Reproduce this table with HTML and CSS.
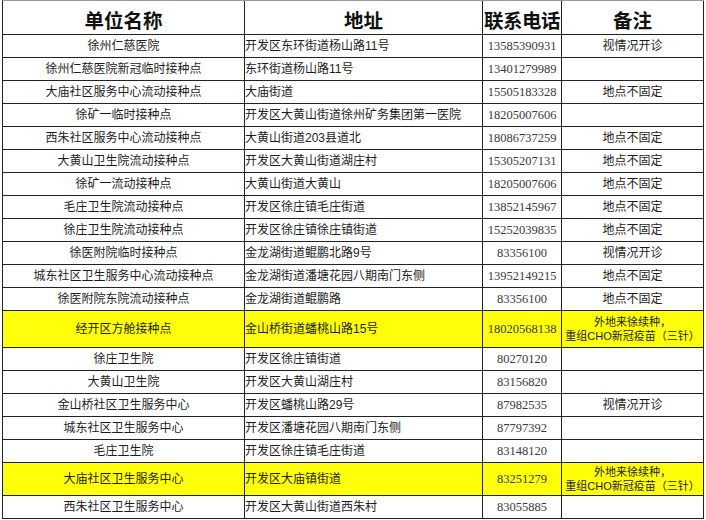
FILE: index.html
```html
<!DOCTYPE html>
<html lang="zh-CN">
<head>
<meta charset="utf-8">
<title>接种点</title>
<link rel="stylesheet" href="styles.css">
</head>
<body>
<table class="sheet">
  <thead>
    <tr class="head">
      <th class="c-name">单位名称</th>
      <th class="c-addr">地址</th>
      <th class="c-tel">联系电话</th>
      <th class="c-note">备注</th>
    </tr>
  </thead>
  <tbody>
    <tr><td class="name">徐州仁慈医院</td><td class="addr">开发区东环街道杨山路11号</td><td class="tel">13585390931</td><td class="note">视情况开诊</td></tr>
    <tr><td class="name">徐州仁慈医院新冠临时接种点</td><td class="addr">东环街道杨山路11号</td><td class="tel">13401279989</td><td class="note"></td></tr>
    <tr><td class="name">大庙社区服务中心流动接种点</td><td class="addr">大庙街道</td><td class="tel">15505183328</td><td class="note">地点不固定</td></tr>
    <tr><td class="name">徐矿一临时接种点</td><td class="addr">开发区大黄山街道徐州矿务集团第一医院</td><td class="tel">18205007606</td><td class="note"></td></tr>
    <tr><td class="name">西朱社区服务中心流动接种点</td><td class="addr">大黄山街道203县道北</td><td class="tel">18086737259</td><td class="note">地点不固定</td></tr>
    <tr><td class="name">大黄山卫生院流动接种点</td><td class="addr">开发区大黄山街道湖庄村</td><td class="tel">15305207131</td><td class="note">地点不固定</td></tr>
    <tr><td class="name">徐矿一流动接种点</td><td class="addr">大黄山街道大黄山</td><td class="tel">18205007606</td><td class="note">地点不固定</td></tr>
    <tr><td class="name">毛庄卫生院流动接种点</td><td class="addr">开发区徐庄镇毛庄街道</td><td class="tel">13852145967</td><td class="note">地点不固定</td></tr>
    <tr><td class="name">徐庄卫生院流动接种点</td><td class="addr">开发区徐庄镇徐庄镇街道</td><td class="tel">15252039835</td><td class="note">地点不固定</td></tr>
    <tr><td class="name">徐医附院临时接种点</td><td class="addr">金龙湖街道鲲鹏北路9号</td><td class="tel">83356100</td><td class="note">视情况开诊</td></tr>
    <tr><td class="name">城东社区卫生服务中心流动接种点</td><td class="addr">金龙湖街道潘塘花园八期南门东侧</td><td class="tel">13952149215</td><td class="note">地点不固定</td></tr>
    <tr><td class="name">徐医附院东院流动接种点</td><td class="addr">金龙湖街道鲲鹏路</td><td class="tel">83356100</td><td class="note">地点不固定</td></tr>
    <tr class="hl hl-a"><td class="name">经开区方舱接种点</td><td class="addr">金山桥街道蟠桃山路15号</td><td class="tel">18020568138</td><td class="note two">外地来徐续种，<br>重组CHO新冠疫苗（三针）</td></tr>
    <tr><td class="name">徐庄卫生院</td><td class="addr">开发区徐庄镇街道</td><td class="tel">80270120</td><td class="note"></td></tr>
    <tr><td class="name">大黄山卫生院</td><td class="addr">开发区大黄山湖庄村</td><td class="tel">83156820</td><td class="note"></td></tr>
    <tr><td class="name">金山桥社区卫生服务中心</td><td class="addr">开发区蟠桃山路29号</td><td class="tel">87982535</td><td class="note">视情况开诊</td></tr>
    <tr><td class="name">城东社区卫生服务中心</td><td class="addr">开发区潘塘花园八期南门东侧</td><td class="tel">87797392</td><td class="note"></td></tr>
    <tr><td class="name">毛庄卫生院</td><td class="addr">开发区徐庄镇毛庄街道</td><td class="tel">83148120</td><td class="note"></td></tr>
    <tr class="hl hl-b"><td class="name">大庙社区卫生服务中心</td><td class="addr">开发区大庙镇街道</td><td class="tel">83251279</td><td class="note two">外地来徐续种，<br>重组CHO新冠疫苗（三针）</td></tr>
    <tr><td class="name">西朱社区卫生服务中心</td><td class="addr">开发区大黄山街道西朱村</td><td class="tel">83055885</td><td class="note"></td></tr>
  </tbody>
</table>
</body>
</html>
```

FILE: styles.css
```css
html, body {
  margin: 0;
  padding: 0;
  background: #ffffff;
}

body {
  font-family: "Liberation Sans", "Noto Sans CJK SC", sans-serif;
  color: #1c1c1c;
}

.sheet {
  margin: 0 0 0 2px;
  border-collapse: separate;
  border-spacing: 0;
  table-layout: fixed;
  width: 702px;
  border-top: 1px solid #9a9a9a;
  border-left: 1px solid #222;
}

.sheet th,
.sheet td {
  box-sizing: border-box;
  padding: 0;
  border-right: 1px solid #222;
  border-bottom: 1px solid #222;
  white-space: nowrap;
  overflow: hidden;
  vertical-align: middle;
}

.c-name { width: 242px; }
.c-addr { width: 238px; }
.c-tel  { width: 79px; }
.c-note { width: 142px; }

.head { height: 34px; }

.head th {
  font-family: "Liberation Serif", "Noto Sans CJK SC", serif;
  font-weight: 700;
  font-size: 19.5px;
  color: #111;
  text-align: center;
  padding-top: 3px;
}

.head .c-tel {
  letter-spacing: -0.5px;
}

tbody tr { height: 23px; }

tbody td {
  font-size: 12px;
  line-height: 14px;
  padding-top: 1px;
}

.name { text-align: center; }

.addr {
  text-align: left;
  padding-left: 2px;
}

.tel {
  text-align: center;
  font-family: "Liberation Serif", "Noto Sans CJK SC", serif;
  font-size: 12.5px;
  color: #3a3a3a;
}

.note { text-align: center; }

.note.two {
  font-size: 11px;
  line-height: 14px;
  letter-spacing: 0;
}

.hl td { background: #ffff0a; }
.hl-a { height: 37px; }
.hl-b { height: 33px; }
```
